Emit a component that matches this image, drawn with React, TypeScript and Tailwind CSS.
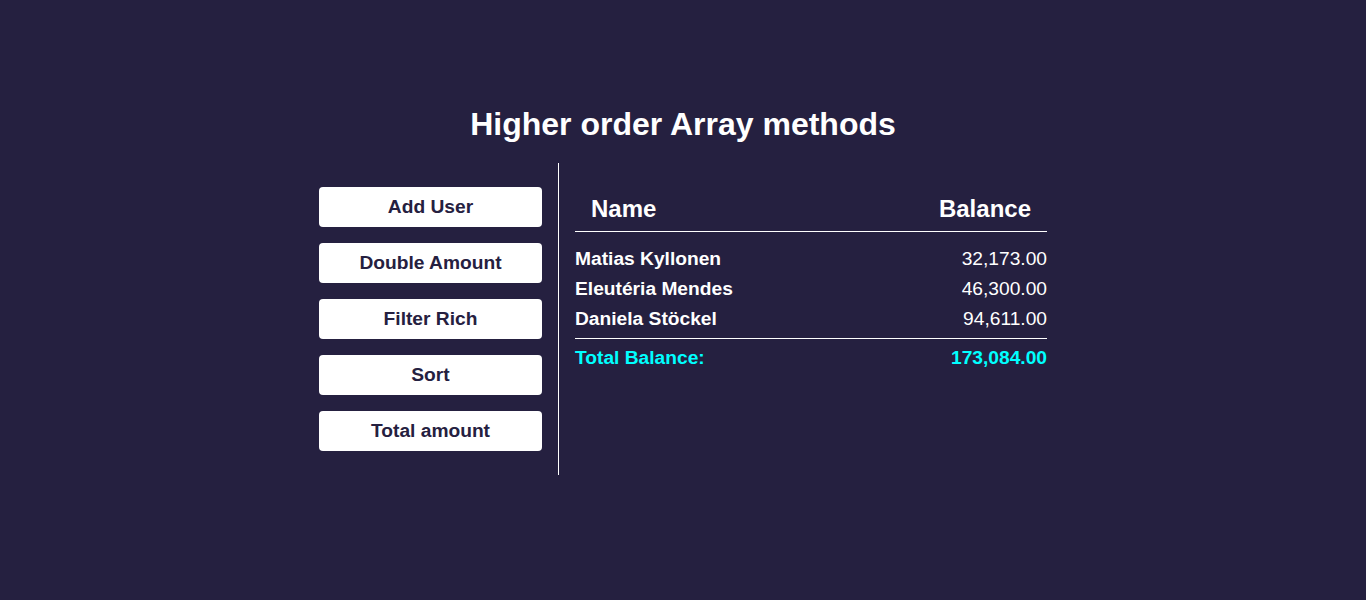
import { useState } from 'react'

interface Person {
  name: string
  money: number
}

const fmt = (n: number) =>
  n.toLocaleString('en-US', { minimumFractionDigits: 2, maximumFractionDigits: 2 })

export default function App() {
  const [people] = useState<Person[]>([
    { name: 'Matias Kyllonen', money: 32173 },
    { name: 'Eleutéria Mendes', money: 46300 },
    { name: 'Daniela Stöckel', money: 94611 },
  ])

  const total = people.reduce((acc, p) => acc + p.money, 0)
  const buttons = ['Add User', 'Double Amount', 'Filter Rich', 'Sort', 'Total amount']

  return (
    <div
      className="min-h-screen w-full bg-[#252040] text-white flex flex-col items-center pt-[104px]"
      style={{ fontFamily: '"Liberation Sans", Arial, sans-serif' }}
    >
      <h1 className="text-[32px] leading-[40px] font-bold mb-[19px]">Higher order Array methods</h1>

      <div className="flex">
        {/* botões */}
        <aside className="w-[240px] py-6 pr-4 border-r border-white flex flex-col gap-4">
          {buttons.map((b) => (
            <button
              key={b}
              className="h-10 w-full bg-white text-[#252040] rounded-[4px] text-[19.2px] font-bold"
            >
              {b}
            </button>
          ))}
        </aside>

        {/* tabela */}
        <main className="w-[488px] pl-4">
          <div className="flex justify-between px-4 pt-8 pb-2 border-b border-white text-[24px] leading-[28px] font-bold">
            <span>Name</span>
            <span>Balance</span>
          </div>
          <div className="pt-[12px] pb-[4px] border-b border-white">
            {people.map((p) => (
              <div key={p.name} className="flex justify-between text-[19.2px] leading-[30px]">
                <strong>{p.name}</strong>
                <span>{fmt(p.money)}</span>
              </div>
            ))}
          </div>
          <div className="flex justify-between pt-[4px] text-[19.2px] leading-[30px] font-bold text-[#00ffff]">
            <span>Total Balance:</span>
            <span>{fmt(total)}</span>
          </div>
        </main>
      </div>
    </div>
  )
}
